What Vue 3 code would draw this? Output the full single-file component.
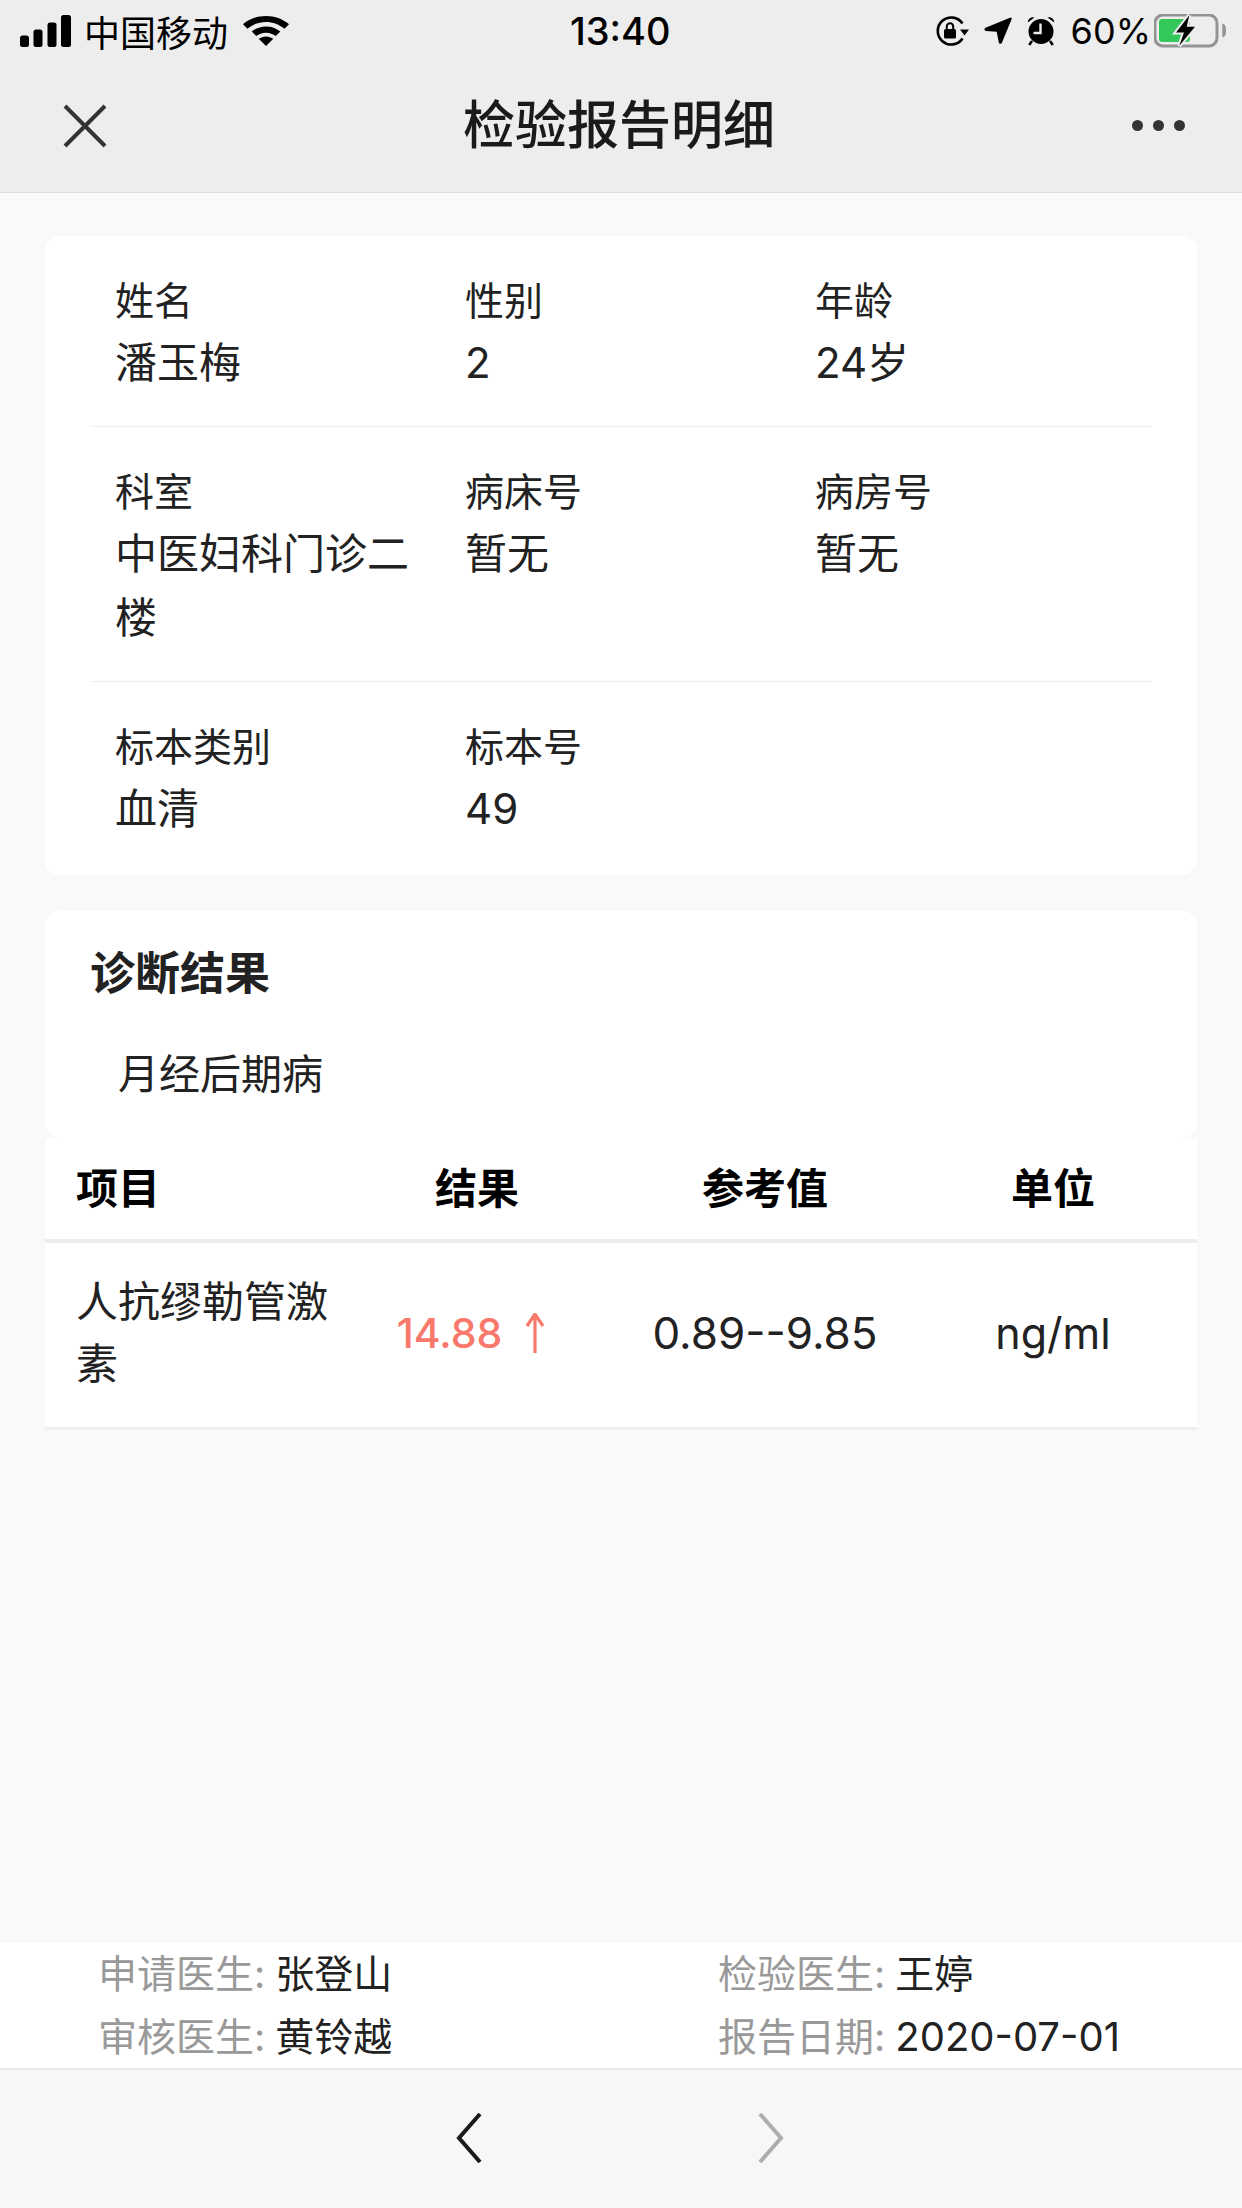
<script setup>
const rows = [
  [
    { label: '姓名', value: '潘玉梅' },
    { label: '性别', value: '2' },
    { label: '年龄', value: '24岁' }
  ],
  [
    { label: '科室', value: '中医妇科门诊二楼' },
    { label: '病床号', value: '暂无' },
    { label: '病房号', value: '暂无' }
  ],
  [
    { label: '标本类别', value: '血清' },
    { label: '标本号', value: '49' }
  ]
]

const doctors = [
  { label: '申请医生:', value: '张登山' },
  { label: '检验医生:', value: '王婷' },
  { label: '审核医生:', value: '黄铃越' },
  { label: '报告日期:', value: '2020-07-01', date: true }
]
</script>

<template>
  <div class="page">
    <header class="top">
      <div class="status">
        <div class="status-left">
          <svg class="signal" width="51" height="32" viewBox="0 0 51 32">
            <rect x="0" y="20.500" width="9" height="11.500" rx="2.500" />
            <rect x="13.500" y="14.500" width="9" height="17.500" rx="2.500" />
            <rect x="27.500" y="7.500" width="9" height="24.500" rx="2.500" />
            <rect x="41" y="0" width="10" height="32" rx="2.500" />
          </svg>
          <span class="carrier">中国移动</span>
          <svg class="wifi" width="46" height="30" viewBox="0 0 46 33" preserveAspectRatio="none">
            <path d="M23 0C14 0 6.500 3.200 0 9l4.500 5C9.800 9.300 16 6.500 23 6.500S36.200 9.300 41.500 14L46 9C39.500 3.200 32 0 23 0z" />
            <path d="M23 11.500c-5.500 0-10.300 2-14.300 5.500l4.500 5c2.700-2.300 6-3.700 9.800-3.700s7.100 1.400 9.800 3.700l4.500-5c-4-3.500-8.800-5.500-14.300-5.500z" />
            <path d="M23 22.500c-2.800 0-5.300 1-7.300 2.600L23 33l7.300-7.900c-2-1.600-4.500-2.600-7.300-2.600z" />
          </svg>
        </div>
        <span class="clock">13:40</span>
        <div class="status-right">
          <svg width="33" height="30" viewBox="0 0 33 30">
            <path d="M26.500 7.500A13.500 13.500 0 1 0 26.500 22.500" fill="none" stroke="#000" stroke-width="2.600" />
            <path d="M24 13.500h9l-4.500 6z" />
            <rect x="8" y="13" width="12" height="9.500" rx="1.500" />
            <path d="M10.800 13.500V10.500a3.200 3.200 0 0 1 6.400 0v3" fill="none" stroke="#000" stroke-width="2" />
          </svg>
          <svg class="loc" width="28" height="28" viewBox="0 0 28 28">
            <path d="M26 .7c1.500-.4 2 .6 1.600 1.600L18 25.500c-.8 1.700-2.800 1.600-3.200 0L12.700 14.700 2 14c-1.800-.3-2-2.500-.5-3.200z" />
          </svg>
          <svg class="alarm" width="28" height="30" viewBox="0 0 28 30">
            <circle cx="14" cy="15.500" r="12.500" />
            <path d="M.8 6.500A5 5 0 0 1 7.500 1.500zM27.200 6.500A5 5 0 0 0 20.500 1.500z" />
            <path d="M5 25l-2.800 4M23 25l2.800 4" stroke="#000" stroke-width="2.500" />
            <path d="M13.500 7.500v9.500H6.500" fill="none" stroke="#ededed" stroke-width="2.400" />
          </svg>
          <span class="percent">60%</span>
          <svg class="battery" width="72" height="34" viewBox="0 0 72 34">
            <rect x="1" y="1" width="62" height="31" rx="8" fill="none" stroke="#949494" stroke-width="3" />
            <rect x="5" y="5" width="31" height="23" rx="3" fill="#34c759" />
            <path d="M68.300 9.500c3 1 3.700 2.500 3.700 7s-.7 6-3.700 7z" fill="#949494" />
            <path d="M35.300 1.200 22 18.500h8L25.300 31.800 41 12.800h-8.300z" fill="#ededed" stroke="#ededed" stroke-width="4" />
            <path d="M35.300 1.200 22 18.500h8L25.300 31.800 41 12.800h-8.300z" fill="#000" />
          </svg>
        </div>
      </div>
      <div class="nav">
        <svg class="close" width="44" height="44" viewBox="0 0 44 44">
          <path d="M2 2l40 40M42 2 2 42" stroke="#333" stroke-width="4" fill="none" />
        </svg>
        <h1 class="title">检验报告明细</h1>
        <div class="more"><i></i><i></i><i></i></div>
      </div>
    </header>

    <main class="content">
      <section class="card info">
        <div v-for="(row, i) in rows" :key="i" class="info-row">
          <div v-for="cell in row" :key="cell.label" class="info-cell">
            <div class="info-label">{{ cell.label }}</div>
            <div class="info-value">{{ cell.value }}</div>
          </div>
        </div>
      </section>

      <section class="card diag">
        <h2 class="diag-title">诊断结果</h2>
        <p class="diag-text">月经后期病</p>
      </section>

      <section class="table">
        <div class="tr th">
          <div class="col first">项目</div>
          <div class="col">结果</div>
          <div class="col">参考值</div>
          <div class="col">单位</div>
        </div>
        <div class="tr td">
          <div class="col first">人抗缪勒管激素</div>
          <div class="col high">
            <span>14.88</span>
            <svg width="22" height="40" viewBox="0 0 22 40">
              <path d="M11 40V2M3 13 11 1l8 12" fill="none" stroke="#f8796b" stroke-width="3.200" />
            </svg>
          </div>
          <div class="col range">0.89--9.85</div>
          <div class="col">ng/ml</div>
        </div>
      </section>
    </main>

    <section class="doctors">
      <div v-for="d in doctors" :key="d.label" class="doctor">
        <span class="doctor-label">{{ d.label }}</span>
        <span class="doctor-value" :class="{ date: d.date }">{{ d.value }}</span>
      </div>
    </section>

    <footer class="toolbar">
      <svg width="26" height="50" viewBox="0 0 26 50">
        <path d="M24 1 3 25l21 24" fill="none" stroke="#1a1a1a" stroke-width="4" />
      </svg>
      <svg width="26" height="50" viewBox="0 0 26 50">
        <path d="M2 1l21 24L2 49" fill="none" stroke="#adadad" stroke-width="4" />
      </svg>
    </footer>
  </div>
</template>

<style scoped>
.page {
  display: flex;
  flex-direction: column;
  height: 2208px;
  background: #f9f9f9;
  color: #222;
  font-family: Inter, "Noto Sans CJK SC", sans-serif;
  overflow: hidden;
}

.top {
  height: 192px;
  background: #ededed;
  border-bottom: 1px solid #ddd;
}

.status {
  position: relative;
  display: flex;
  justify-content: space-between;
  align-items: center;
  height: 62px;
  padding: 0 16px 0 20px;
  color: #000;
}

.status svg {
  display: block;
  fill: #000;
}

.status-left,
.status-right {
  display: flex;
  align-items: center;
}

.carrier {
  margin-left: 13px;
  font-size: 36px;
}

.wifi {
  margin-left: 15px;
}

.clock {
  position: absolute;
  left: 570px;
  top: 9px;
  font-size: 38px;
  line-height: 44px;
  font-weight: 500;
}

.loc {
  margin-left: 15px;
}

.alarm {
  margin-left: 15px;
}

.percent {
  margin-left: 16px;
  font-size: 36px;
}

.battery {
  margin-left: 3px;
}

.nav {
  position: relative;
  display: flex;
  align-items: center;
  justify-content: center;
  height: 126px;
  padding: 0 4px 8px 0;
  box-sizing: border-box;
}

.close {
  position: absolute;
  left: 63px;
  top: 42px;
}

.title {
  margin: 0;
  font-size: 52px;
  font-weight: 500;
  color: #1a1a1a;
}

.more {
  position: absolute;
  left: 1132px;
  top: 58px;
  display: flex;
  gap: 10px;
}

.more i {
  width: 11px;
  height: 11px;
  border-radius: 50%;
  background: #333;
}

.content {
  flex: 1;
  padding: 43px 45px 0;
}

.card {
  background: #fff;
  border-radius: 15px;
}

.info {
  padding: 0 45px;
}

.info-row {
  display: flex;
  padding: 36px 0 31px;
  border-bottom: 1px solid #eee;
}

.info-row:last-child {
  padding-bottom: 34px;
  border-bottom: 0;
}

.info-cell {
  width: 350px;
  padding: 0 30px 0 25px;
  box-sizing: border-box;
}

.info-label {
  font-size: 39px;
  line-height: 58px;
}

.info-value {
  margin-top: 1px;
  font-size: 42px;
  line-height: 64px;
}

.diag {
  height: 227px;
  margin-top: 36px;
  padding: 35px 45px 0;
  box-sizing: border-box;
}

.diag-title {
  margin: 0;
  font-size: 45px;
  line-height: 56px;
  font-weight: 700;
}

.diag-text {
  margin: 41px 0 0 28px;
  font-size: 41px;
  line-height: 63px;
}

.table {
  background: #fff;
}

.tr {
  display: grid;
  grid-template-columns: repeat(4, 1fr);
  align-items: center;
  text-align: center;
}

.th {
  height: 105px;
  padding-bottom: 6px;
  box-sizing: border-box;
  border-bottom: 4px solid #eee;
  font-size: 42px;
  font-weight: 700;
  color: #000;
}

.td {
  padding: 28px 0 32px;
  border-bottom: 3px solid #eee;
  font-size: 43px;
}

.first {
  padding-left: 31px;
  text-align: left;
}

.td .first {
  font-size: 42px;
  line-height: 62px;
}

.high {
  display: flex;
  align-items: center;
  justify-content: center;
  gap: 22px;
  padding-right: 11px;
  font-size: 41px;
  font-weight: 500;
  color: #f8796b;
}

.high svg {
  display: block;
}

.range {
  font-size: 44px;
}

.doctors {
  display: grid;
  grid-template-columns: 620px 1fr;
  height: 125px;
  padding-left: 98px;
  background: #fff;
  border-bottom: 2px solid #e8e8e8;
}

.doctor {
  font-size: 39px;
  line-height: 62.5px;
}

.doctor-label {
  color: #999;
}

.doctor-value {
  margin-left: 10px;
}

.date {
  font-size: 40px;
}

.toolbar {
  display: flex;
  justify-content: center;
  gap: 276px;
  height: 138px;
  padding: 43px 2px 0 0;
  box-sizing: border-box;
  background: #f7f7f7;
}
</style>

<style>
html, body {
  margin: 0;
  background: #f9f9f9;
}
</style>
